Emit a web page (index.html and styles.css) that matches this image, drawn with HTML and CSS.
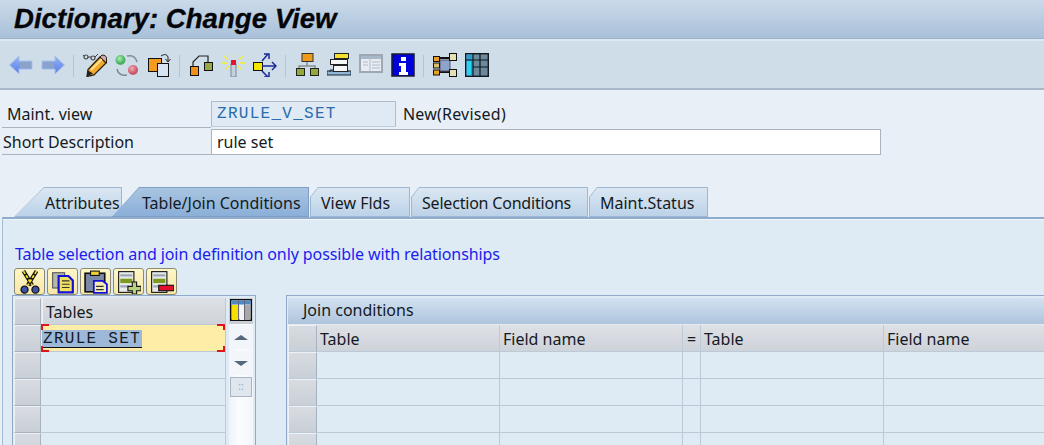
FILE: index.html
```html
<!DOCTYPE html>
<html lang="en">
<head>
<meta charset="utf-8">
<title>Dictionary: Change View</title>
<link rel="stylesheet" href="styles.css">
</head>
<body>
<div class="page">
  <header class="titlebar"><h1>Dictionary: Change View</h1></header>
  <nav class="toolbar">
    <svg class="ic" viewBox="0 0 24 24"><defs><linearGradient id="ar" x1="0" y1="0" x2="0" y2="1"><stop offset="0" stop-color="#93b4f4"/><stop offset="1" stop-color="#5a7ee8"/></linearGradient></defs><path d="M.5 12 10 3v5h13v8H10v5z" fill="url(#ar)" stroke="#a9c2e4"/><path d="M11 9h11v6H11z" fill="#8ba3c8"/></svg>
    <svg class="ic" viewBox="0 0 24 24"><path d="M23.5 12 14 3v5H1v8h13v5z" fill="url(#ar)" stroke="#a9c2e4"/><path d="M2 9h11v6H2z" fill="#8ba3c8"/></svg>
    <i class="sep"></i>
    <svg class="ic" viewBox="0 0 24 24"><path d="M4 23.500l1-7L17 4l6 6L11 22z" fill="#f2a92c" stroke="#2a2010" stroke-width="1.300"/><path d="M8 17 19 6" stroke="#ffe08a" stroke-width="2.200"/><path d="M17 4l2-2 3 .5 1.500 2V10z" fill="#d0a8b0" stroke="#2a2010"/><path d="M4 23.500l1-6 5 3z" fill="#222"/><circle cx="3" cy="4" r="2" fill="none" stroke="#444" stroke-width="1.200"/><circle cx="10" cy="5" r="2" fill="none" stroke="#444" stroke-width="1.200"/><path d="M5 4h3M0 2l1 1M12 4l3-3" stroke="#444" fill="none"/></svg>
    <svg class="ic" viewBox="0 0 24 24"><defs><radialGradient id="gc" cx=".4" cy=".35"><stop offset="0" stop-color="#a8f0b0"/><stop offset="1" stop-color="#48b060"/></radialGradient><radialGradient id="rc" cx=".4" cy=".35"><stop offset="0" stop-color="#f0b0b8"/><stop offset="1" stop-color="#c85868"/></radialGradient></defs><circle cx="5.500" cy="7" r="5" fill="url(#gc)"/><circle cx="18" cy="17" r="5" fill="url(#rc)"/><path d="M12 3c5-1 9 1 10 6M12 22c-5 1-9-1-10-6" fill="none" stroke="#7c8a98" stroke-width="1.500"/></svg>
    <svg class="ic" viewBox="0 0 24 24"><rect x="1.500" y="5.500" width="13" height="13" fill="#f49a20" stroke="#111"/><rect x="10.500" y="10.500" width="11" height="13" fill="#d8e4f4" stroke="#111"/><path d="M14 3c3-2 6-2 7 1v4M18.500 6l2.500 3 2.500-3" fill="none" stroke="#222"/></svg>
    <i class="sep"></i>
    <svg class="ic" viewBox="0 0 24 24"><rect x="1.500" y="13.500" width="8" height="9" fill="#f0901a" stroke="#111"/><rect x="15.500" y="9.500" width="8" height="8" fill="#98a848" stroke="#111"/><path d="M4 13V9l6-6h9v6" fill="none" stroke="#222" stroke-width="1.200"/></svg>
    <svg class="ic" viewBox="0 0 24 24"><rect x="10" y="11" width="5" height="13" fill="#c2d0de" stroke="#7a8a9a"/><rect x="10" y="7" width="5" height="5" fill="#e8102c"/><path d="M12.500 1v3M3 3l4 4M22 3l-4 4M1 10h6M18 10h6M5 16l3-3M20 16l-3-3" stroke="#f2ee30" stroke-width="1.300"/></svg>
    <svg class="ic" viewBox="0 0 24 24"><rect x=".500" y="9.500" width="9" height="8" fill="#f5e600" stroke="#111"/><path d="M9 13h14M19 9l4 4-4 4M9 8l6-7M11 1h5v5M9 18l6 6M11 24h5v-5" fill="none" stroke="#1c2a94" stroke-width="1.500"/></svg>
    <i class="sep"></i>
    <svg class="ic" viewBox="0 0 24 24"><path d="M12 8v5M4 18v-5h16v5" fill="none" stroke="#8a8f90" stroke-width="1.500"/><rect x="7" y=".500" width="11" height="8" fill="#f09a1c" stroke="#333"/><rect x="1.500" y="15.500" width="8" height="7" fill="#94a83c" stroke="#222"/><rect x="15.500" y="15.500" width="8" height="7" fill="#94a83c" stroke="#222"/></svg>
    <svg class="ic" viewBox="0 0 24 24"><path d="M0 22v-4h24v4zM3 19V17h18v2" fill="#8fb4d4" stroke="#1a2a3a"/><rect x="7.500" y=".500" width="14" height="5" fill="#f5e030" stroke="#222"/><rect x="3.500" y="6.500" width="17" height="5" fill="#f4f6f8" stroke="#222"/><rect x="6.500" y="12.500" width="14" height="6" fill="#f4f6f8" stroke="#222"/></svg>
    <svg class="ic" viewBox="0 0 24 24"><rect x="1" y="2" width="22" height="17" fill="#e6ecf2" stroke="#9fa8b2" stroke-width="2"/><rect x="2" y="3" width="20" height="3" fill="#a9b8c8"/><path d="M11 5v13M4 9h5M4 12h5M13 9h8M13 12h8M13 15h8" stroke="#b2bcc8"/></svg>
    <svg class="ic" viewBox="0 0 24 24"><rect x="1" y="1" width="22" height="22" fill="#0000d8" stroke="#1a1a30" stroke-width="1.500"/><rect x="10" y="4" width="5" height="4" fill="#fff"/><path d="M8 10h7v9h2v3H8v-3h2v-6H8z" fill="#fff"/></svg>
    <i class="sep"></i>
    <svg class="ic" viewBox="0 0 24 24"><path d="M6 5h12M6 19h12" stroke="#111" stroke-width="2"/><rect x="7" y="7" width="10" height="11" fill="#8ca4cc" stroke="#556"/><rect x=".500" y="3.500" width="6" height="5" fill="#e8a028" stroke="#111"/><rect x=".500" y="10" width="6" height="5" fill="#d8c070" stroke="#111"/><rect x=".500" y="17" width="6" height="5" fill="#e8a028" stroke="#111"/><rect x="16.500" y=".500" width="7" height="7" fill="#e4e0b8" stroke="#111"/><rect x="16.500" y="16.500" width="7" height="7" fill="#e4e0b8" stroke="#111"/></svg>
    <svg class="ic" viewBox="0 0 24 24"><rect x=".700" y=".700" width="22.600" height="22.600" fill="#6c8a9c" stroke="#101820" stroke-width="1.400"/><rect x="1.500" y="1.500" width="6" height="21" fill="#2a9cd0"/><rect x="2" y="8" width="4" height="14" fill="#28d4f4"/><path d="M8 1v22M15 1v22M1 7h22M8 14h15" stroke="#101820" stroke-width="1.200"/></svg>
  </nav>
  <section class="form">
    <div class="frow"><label class="flabel flabel-a">Maint. view</label><span class="field field-ro">ZRULE_V_SET</span><span class="fnote">New(Revised)</span></div>
    <div class="frow frow-b"><label class="flabel flabel-b">Short Description</label><span class="field field-wide">rule set</span></div>
  </section>
  <div class="tabs">
    <div class="tab tab-first"><span>Attributes</span></div>
    <div class="tab tab-active"><span>Table/Join Conditions</span></div>
    <div class="tab tab-plain tab-view"><span>View Flds</span></div>
    <div class="tab tab-plain tab-sel"><span>Selection Conditions</span></div>
    <div class="tab tab-plain tab-stat"><span>Maint.Status</span></div>
  </div>
  <main class="panel">
    <p class="info">Table selection and join definition only possible with relationships</p>
    <div class="btnbar">
      <button class="tbtn"><svg viewBox="0 0 22 22"><path d="M5 1l8 13M17 1 9 14" stroke="#111" stroke-width="3.600" fill="none"/><path d="M5 1l8 13M17 1 9 14" stroke="#f5e020" stroke-width="1.600" stroke-dasharray="3 1.500" fill="none"/><circle cx="6" cy="18" r="3.200" fill="#3a52a8" stroke="#111" stroke-width="1.200"/><circle cx="16" cy="18" r="3.200" fill="#3a52a8" stroke="#111" stroke-width="1.200"/></svg></button>
      <button class="tbtn"><svg viewBox="0 0 22 22"><rect x="1.500" y="2.500" width="11" height="14" fill="#b8b8a8" stroke="#555"/><path d="M7 5.500h9l4 4v11H7z" fill="#f2e060" stroke="#1010d8" stroke-width="2"/><path d="M10 10h7M10 13h7M10 16h7" stroke="#333"/></svg></button>
      <button class="tbtn"><svg viewBox="0 0 22 22"><rect x="1" y="3" width="18" height="17" fill="#7c88a8" stroke="#111" stroke-width="1.500"/><rect x="6" y="1" width="8" height="4" fill="#f0d030" stroke="#111"/><path d="M9 10h8l4 3v8H9z" fill="#f4ecb0" stroke="#1010d8" stroke-width="1.600"/><path d="M11 15h7M11 18h7" stroke="#333"/></svg></button>
      <button class="tbtn"><svg viewBox="0 0 22 22"><rect x="1.500" y="1.500" width="14" height="19" fill="#e8ece8" stroke="#111"/><path d="M3 5h11M3 15h8" stroke="#9aa8b8" stroke-width="2"/><rect x="3" y="8" width="11" height="4" fill="#7c9a20"/><path d="M10 15h4v-4h4v4h4v4h-4v3h-4v-3h-4z" fill="#b8d080" stroke="#111"/></svg></button>
      <button class="tbtn"><svg viewBox="0 0 22 22"><rect x="1.500" y="1.500" width="14" height="19" fill="#e8ece8" stroke="#111"/><path d="M3 5h11M3 15h8" stroke="#9aa8b8" stroke-width="2"/><rect x="3" y="8" width="11" height="4" fill="#7c9a20"/><rect x="8" y="14" width="14" height="5" fill="#e0102c" stroke="#111"/></svg></button>
    </div>
    <div class="tables">
      <div class="ltable">
        <div class="lmain">
          <div class="trow trow-head"><div class="cell sel"></div><div class="cell lcol head">Tables</div></div>
          <div class="trow"><div class="cell sel"></div><div class="cell lcol current">
            <span class="mono-sel">ZRULE SET</span>
            <i class="cr cr-tl"></i><i class="cr cr-tr"></i><i class="cr cr-bl"></i><i class="cr cr-br"></i>
          </div></div>
          <div class="trow"><div class="cell sel"></div><div class="cell lcol"></div></div>
          <div class="trow"><div class="cell sel"></div><div class="cell lcol"></div></div>
          <div class="trow"><div class="cell sel"></div><div class="cell lcol"></div></div>
          <div class="trow"><div class="cell sel"></div><div class="cell lcol"></div></div>
        </div>
        <div class="lside">
          <div class="cfg"><svg viewBox="0 0 22 22"><rect x=".700" y=".700" width="20.600" height="20.600" fill="#e8ecf0" stroke="#111" stroke-width="1.400"/><rect x="1.500" y="1.500" width="19" height="4" fill="#4a8ac8"/><rect x="2" y="6" width="6" height="15" fill="#f5e000"/><rect x="10" y="6" width="4" height="15" fill="#f4f4f4"/><rect x="15" y="6" width="5" height="15" fill="#a8a8a8"/><path d="M8.500 1v20M14.500 1v20" stroke="#667" stroke-width="1"/></svg></div>
          <div class="scroll">
            <div class="sbtn"><b class="up"></b></div>
            <div class="sbtn"><b class="down"></b></div>
            <div class="grip"><span>:: </span></div>
          </div>
        </div>
      </div>
      <div class="rtable">
        <div class="rtitle">Join conditions</div>
        <div class="rgrid rgrid-head">
          <div class="rc sel"></div><div class="rc head">Table</div><div class="rc head">Field name</div><div class="rc head eq">=</div><div class="rc head">Table</div><div class="rc head">Field name</div>
        </div>
        <div class="rgrid"><div class="rc sel"></div><div class="rc"></div><div class="rc"></div><div class="rc"></div><div class="rc"></div><div class="rc"></div></div>
        <div class="rgrid"><div class="rc sel"></div><div class="rc"></div><div class="rc"></div><div class="rc"></div><div class="rc"></div><div class="rc"></div></div>
        <div class="rgrid"><div class="rc sel"></div><div class="rc"></div><div class="rc"></div><div class="rc"></div><div class="rc"></div><div class="rc"></div></div>
        <div class="rgrid"><div class="rc sel"></div><div class="rc"></div><div class="rc"></div><div class="rc"></div><div class="rc"></div><div class="rc"></div></div>
      </div>
    </div>
  </main>
</div>
</body>
</html>
```
FILE: styles.css
```css
* { box-sizing: border-box; }
html, body { margin: 0; padding: 0; height: 445px; overflow: hidden; }
body { font-family: "Noto Sans", "Liberation Sans", sans-serif; font-size: 16px; color: #141a22; background: #e8eff7; }
.page { width: 1044px; height: 445px; overflow: hidden; }

.titlebar { height: 41px; padding-left: 14px; background: linear-gradient(#cbdaea, #a9c1d9 95%); border-bottom: 2px solid #dfe8f0; box-shadow: inset 0 -1px 0 #9db3ca; }
.titlebar h1 { margin: 0; font: italic bold 27.6px/37px "Liberation Sans", sans-serif; color: #05060a; -webkit-text-stroke: .3px #05060a; }

.toolbar { height: 49px; display: flex; align-items: flex-start; gap: 8px; padding: 12px 0 0 9px; background: #cfdde9; border-bottom: 2px solid #a8b8c8; }
.ic { width: 24px; height: 24px; flex: none; display: block; }
.sep { width: 1px; height: 22px; margin: 2px 1px 0 0; background: #aec6dc; flex: none; }

.form { padding: 10px 0 0 2px; height: 97px; }
.frow { display: flex; align-items: flex-start; height: 28px; }
.frow-b { height: 27px; }
.flabel { width: 209px; height: 27px; line-height: 29px; border-bottom: 1px solid #aab4bf; flex: none; }
.flabel-a { padding-left: 5px; height: 28px; }
.flabel-b { padding-left: 1px; }
.field { display: block; height: 26px; margin-top: 1px; }
.field-ro { width: 185px; padding-left: 5px; font: 16px/24px "Liberation Mono", monospace; letter-spacing: 1.28px; color: #2a6cae; background: #dfeaf4; border: 1px solid #b0bcc8; border-bottom-color: #c4ced8; }
.fnote { margin: 1px 0 0 7px; line-height: 26px; letter-spacing: .2px; white-space: nowrap; }
.field-wide { width: 670px; margin-top: 1px; padding-left: 5px; line-height: 24px; background: #fff; border: 1px solid #aab4bf; }

.tabs { display: flex; height: 30px; padding-left: 14px; }
.tab { height: 30px; line-height: 33px; white-space: nowrap; flex: none; padding: 0 0 1px; }
.tab span { display: block; height: 29px; }
.tab-first { width: 108px; background: #9db6d2; clip-path: polygon(0 100%, 30px 0, 100% 0, 100% 100%); }
.tab-first span { padding-left: 31px; background: linear-gradient(#dce8f3, #bcd2e8); clip-path: polygon(1px 100%, 30px 1px, calc(100% - 1px) 1px, calc(100% - 1px) 100%); }
.tab-active { width: 197px; margin-left: -10px; position: relative; background: #7f9fc6; clip-path: polygon(0 100%, 27px 0, 100% 0, 100% 100%); }
.tab-active span { padding-left: 30px; background: linear-gradient(#aac5e1, #8bafd8); clip-path: polygon(1px 100%, 27px 1px, calc(100% - 1px) 1px, calc(100% - 1px) 100%); }
.tab-plain { background: #9db6d2; clip-path: polygon(0 10px, 8px 0, 100% 0, 100% 100%, 0 100%); margin-left: 1px; }
.tab-plain span { padding-left: 11px; background: linear-gradient(#dce8f3, #bcd2e8); clip-path: polygon(1px 10px, 8px 1px, calc(100% - 1px) 1px, calc(100% - 1px) 100%, 1px 100%); }
.tab-view { width: 100px; }
.tab-sel { width: 177px; letter-spacing: -.2px; }
.tab-stat { width: 119px; }

.panel { margin-left: 2px; height: 228px; padding-top: 1px; background: #deebf5; border-top: 2px solid #8fabcd; border-left: 1px solid #a5bcd6; box-shadow: inset 0 1px 0 #f2f6fa; }
.info { margin: 0; padding: 22px 0 0 12px; height: 48px; line-height: 24px; color: #1c1cee; letter-spacing: -.1px; white-space: nowrap; }

.btnbar { display: flex; gap: 2px; height: 28px; padding-left: 11px; }
.tbtn { width: 31px; height: 27px; padding: 1px 0 0; border: 1px solid #8c8a74; border-radius: 3px; background: linear-gradient(#fff6c8, #f7e8a8); display: flex; justify-content: center; align-items: flex-start; }
.tbtn svg { width: 24px; height: 24px; display: block; flex: none; }

.tables { display: flex; gap: 30px; padding-left: 9px; margin-top: -1px; }
.ltable { width: 244px; height: 150px; display: flex; border: 1px solid #8faac9; border-bottom: 0; padding: 2px 0 0 1px; flex: none; }
.lmain { width: 212px; flex: none; }
.trow { display: flex; height: 27px; }
.trow-head { height: 27px; }
.cell { height: 27px; }
.sel { background: linear-gradient(#d8dce2, #c9cfd7); border: 1px solid #eef2f6; border-right-color: #a7b2be; border-bottom-color: #a7b2be; }
.trow .sel { width: 27px; flex: none; }
.lcol { flex: 1; border-bottom: 1px solid #bcc9d6; border-right: 1px solid #bcc9d6; position: relative; }
.head { background: linear-gradient(#dee1e5, #ced3da); padding-left: 4px; line-height: 29px; border-left: 1px solid #eef1f4; }
.lcol.head { padding-left: 3px; margin-left: 1px; }
.current { background: #fdeda6; height: 27px; }
.mono-sel { display: inline-block; margin: 5px 0 0 1px; height: 18px; padding: 0 1px; font: 16px/18px "Liberation Mono", monospace; letter-spacing: 1.28px; white-space: nowrap; background: #9db8d8; color: #141a22; border-bottom: 1px solid #111; }
.cr { position: absolute; width: 8px; height: 6px; border: 2px solid #e0141e; }
.cr-tl { left: 0; top: -1px; border-right: 0; border-bottom: 0; }
.cr-tr { right: 0; top: -1px; border-left: 0; border-bottom: 0; }
.cr-bl { left: 0; bottom: -1px; border-right: 0; border-top: 0; }
.cr-br { right: 0; bottom: -1px; border-left: 0; border-top: 0; }

.lside { width: 30px; flex: none; padding-left: 3px; }
.cfg { width: 24px; height: 26px; padding: 1px; background: #c8cfd7; }
.cfg svg { width: 22px; height: 22px; display: block; }
.scroll { width: 24px; height: 125px; padding-top: 1px; background: linear-gradient(90deg, #edf3f9, #fbfcfe 40%, #f4f7fb); }
.sbtn { height: 24px; margin-bottom: 2px; background: #f2f6fb; display: flex; align-items: center; justify-content: center; }
.up, .down { width: 0; height: 0; border: 7px solid transparent; display: block; }
.up { border-top: 0; border-bottom: 5px solid #56687c; }
.down { border-bottom: 0; border-top: 5px solid #56687c; }
.grip { width: 22px; height: 20px; margin-left: 1px; background: #dfe6ee; border: 1px solid #a8b4c2; text-align: center; font-size: 10px; line-height: 17px; color: #9aa6b4; overflow: hidden; }

.rtable { flex: 1; height: 150px; border-left: 1px solid #8faac9; border-top: 1px solid #8faac9; padding: 2px 0 0 1px; overflow: hidden; }
.rtitle { height: 27px; padding-left: 15px; line-height: 24px; background: linear-gradient(#d2e1f0, #adc4dc); box-shadow: inset 0 -1px 0 #e2eaf2; }
.rgrid { display: grid; grid-template-columns: 29px 183px 183px 18px 183px 161px; grid-template-rows: 27px; height: 27px; }
.rc { min-height: 0; overflow: hidden; border-bottom: 1px solid #bcc9d6; border-right: 1px solid #bcc9d6; }
.rc.sel { border-right-color: #a7b2be; }
.rc.head { padding-left: 3px; line-height: 28px; border-left: 0; white-space: nowrap; }
.rc.eq { padding-left: 4px; }
```
